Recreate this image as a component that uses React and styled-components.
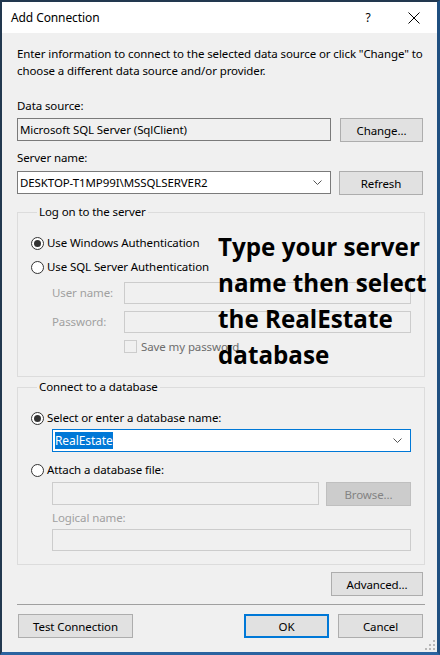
import React from "react";
import styled, { createGlobalStyle } from "styled-components";

const Global = createGlobalStyle`
  * { box-sizing: border-box; }
  body {
    margin: 0;
    background: #1c2b3d;
    font-family: "Noto Sans", "Open Sans", sans-serif;
    font-size: 11.5px;
    letter-spacing: -0.1px;
    color: #000;
  }
`;

const Window = styled.div`
  width: 440px;
  height: 655px;
  display: flex;
  flex-direction: column;
  border-style: solid;
  border-color: #22384f #1f4f80 #2a63a0 #22384f;
  border-width: 2px 3px 3px 2px;
  background: #f0f0f0;
  position: relative;
  overflow: hidden;
`;

const TitleBar = styled.div`
  height: 31px;
  flex: none;
  background: #fff;
  display: flex;
  align-items: center;
  padding: 0 0 0 9px;
  font-size: 12px;
  .title {
    flex: 1;
  }
  .ctl {
    width: 46px;
    height: 31px;
    display: flex;
    align-items: center;
    justify-content: center;
  }
`;

const Body = styled.div`
  flex: 1;
  padding: 12px 14px 0 15px;
  display: flex;
  flex-direction: column;
`;

const Desc = styled.p`
  margin: 0;
  line-height: 17px;
  white-space: nowrap;
`;

const Label = styled.div`
  line-height: 16px;
  height: 16px;
  margin-top: ${(p) => p.$mt ?? 0}px;
  margin-bottom: ${(p) => p.$mb ?? 0}px;
  color: ${(p) => (p.$disabled ? "#a0a0a0" : "#000")};
  white-space: nowrap;
`;

const Row = styled.div`
  display: flex;
  align-items: flex-start;
  gap: ${(p) => p.$gap ?? 8}px;
  margin-top: ${(p) => p.$mt ?? 0}px;
  padding-left: ${(p) => p.$indent ?? 0}px;
`;

const TextBox = styled.div`
  height: ${(p) => p.$h ?? 23}px;
  width: ${(p) => (p.$w ? p.$w + "px" : "auto")};
  flex: ${(p) => (p.$w ? "none" : 1)};
  border: 1px solid ${(p) => p.$border || (p.$disabled ? "#cccccc" : "#7a7a7a")};
  background: ${(p) => (p.$white ? "#fff" : "#f0f0f0")};
  display: flex;
  align-items: center;
  padding: 0 2px 0 2px;
  white-space: nowrap;
  position: relative;
`;

const Chevron = styled.svg`
  position: absolute;
  right: 8px;
  top: 50%;
  margin-top: -3px;
`;

const Button = styled.div`
  width: ${(p) => p.$w}px;
  height: ${(p) => p.$h ?? 24}px;
  flex: none;
  display: flex;
  align-items: center;
  justify-content: center;
  background: ${(p) => (p.$disabled ? "#cccccc" : "#e1e1e1")};
  color: ${(p) => (p.$disabled ? "#838383" : "#000")};
  border: ${(p) =>
    p.$default ? "2px solid #0078d7" : `1px solid ${p.$disabled ? "#bfbfbf" : "#adadad"}`};
  white-space: nowrap;
`;

const Group = styled.fieldset`
  margin: ${(p) => p.$mt ?? 0}px 0 0 0;
  width: 408px;
  border: 1px solid #dcdcdc;
  padding: 15px 13px ${(p) => p.$pb ?? 13}px 13px;
  min-width: 0;
  legend {
    margin-left: 6px;
    padding: 0 2px;
    line-height: 16px;
  }
`;

const RadioRow = styled.label`
  display: flex;
  align-items: center;
  gap: 3px;
  height: 16px;
  line-height: 16px;
  margin-top: ${(p) => p.$mt ?? 0}px;
  white-space: nowrap;
`;

const RadioDot = styled.span`
  width: 13px;
  height: 13px;
  border-radius: 50%;
  border: 1px solid #333;
  background: #fff;
  display: flex;
  align-items: center;
  justify-content: center;
  flex: none;
  &::after {
    content: "";
    width: 7px;
    height: 7px;
    border-radius: 50%;
    background: ${(p) => (p.$on ? "#333" : "transparent")};
  }
`;

const FieldLabel = styled.div`
  width: 72px;
  flex: none;
  line-height: 22px;
  color: #a0a0a0;
`;

const CheckRow = styled.div`
  display: flex;
  align-items: center;
  gap: 4px;
  height: 13px;
  margin-top: 7px;
  padding-left: 93px;
  color: #6d6d6d;
  .box {
    width: 13px;
    height: 13px;
    border: 1px solid #cccccc;
    background: #f0f0f0;
  }
`;

const Selected = styled.span`
  background: #0078d7;
  color: #fff;
  line-height: 17px;
  font-size: 12px;
`;

const Spacer = styled.span`
  flex: 1;
`;

const Separator = styled.div`
  height: 1px;
  background: #a0a0a0;
  width: 408px;
  margin-top: 8px;
`;

const Footer = styled.div`
  display: flex;
  gap: 9px;
  margin-top: 9px;
  padding-left: 1px;
`;

const Annotation = styled.div`
  position: absolute;
  left: 216px;
  top: 227px;
  font-family: "Open Sans", "Noto Sans", sans-serif;
  font-weight: 700;
  font-size: 24.2px;
  letter-spacing: 0;
  line-height: 36px;
  color: #000;
  white-space: pre;
`;

const Grip = styled.svg`
  position: absolute;
  right: 2px;
  bottom: 2px;
`;

const chevron = (
  <Chevron width="9" height="5" viewBox="0 0 9 5">
    <path d="M0.5 0.5 L4.5 4.5 L8.5 0.5" fill="none" stroke="#555" />
  </Chevron>
);

export default function App() {
  return (
    <>
      <Global />
      <Window>
        <TitleBar>
          <span className="title">Add Connection</span>
          <span className="ctl">?</span>
          <span className="ctl">
            <svg width="12" height="12" viewBox="0 0 12 12">
              <path d="M0.5 0.5 L11.5 11.5 M11.5 0.5 L0.5 11.5" stroke="#000" strokeWidth="1" />
            </svg>
          </span>
        </TitleBar>
        <Body>
          <Desc>
            Enter information to connect to the selected data source or click "Change" to
            <br />
            choose a different data source and/or provider.
          </Desc>

          <Label $mt={19} $mb={4}>Data source:</Label>
          <Row $gap={9}>
            <TextBox $w={314}>Microsoft SQL Server (SqlClient)</TextBox>
            <Button $w={83}>Change...</Button>
          </Row>

          <Label $mt={8} $mb={5}>Server name:</Label>
          <Row $gap={8}>
            <TextBox $w={314} $white>
              DESKTOP-T1MP99I\MSSQLSERVER2
              {chevron}
            </TextBox>
            <Button $w={84}>Refresh</Button>
          </Row>

          <Group $mt={9} $pb={23}>
            <legend>Log on to the server</legend>
            <RadioRow>
              <RadioDot $on />
              Use Windows Authentication
            </RadioRow>
            <RadioRow $mt={8}>
              <RadioDot />
              Use SQL Server Authentication
            </RadioRow>
            <Row $mt={7} $gap={0} $indent={21}>
              <FieldLabel>User name:</FieldLabel>
              <TextBox $h={22} $disabled />
            </Row>
            <Row $mt={7} $gap={0} $indent={21}>
              <FieldLabel>Password:</FieldLabel>
              <TextBox $h={22} $disabled />
            </Row>
            <CheckRow>
              <span className="box" />
              Save my password
            </CheckRow>
          </Group>

          <Group $mt={2} $pb={13}>
            <legend>Connect to a database</legend>
            <RadioRow>
              <RadioDot $on />
              Select or enter a database name:
            </RadioRow>
            <Row $mt={3} $indent={21}>
              <TextBox $white $border="#0078d7">
                <Selected>RealEstate</Selected>
                {chevron}
              </TextBox>
            </Row>
            <RadioRow $mt={10}>
              <RadioDot />
              Attach a database file:
            </RadioRow>
            <Row $mt={4} $indent={21} $gap={7}>
              <TextBox $disabled />
              <Button $w={85} $disabled>Browse...</Button>
            </Row>
            <Row $mt={4} $indent={21}>
              <Label $disabled>Logical name:</Label>
            </Row>
            <Row $mt={3} $indent={21}>
              <TextBox $h={22} $disabled />
            </Row>
          </Group>

          <Row $mt={7}>
            <Spacer />
            <Button $w={92}>Advanced...</Button>
          </Row>

          <Separator />

          <Footer>
            <Button $w={115}>Test Connection</Button>
            <Spacer />
            <Button $w={85} $default>OK</Button>
            <Button $w={85}>Cancel</Button>
          </Footer>
        </Body>

        <Annotation>{"Type your server\nname then select\nthe RealEstate\ndatabase"}</Annotation>

        <Grip width="10" height="10" viewBox="0 0 10 10">
          <g fill="#b8b8b8">
            <rect x="8" y="0" width="2" height="2" />
            <rect x="4" y="4" width="2" height="2" />
            <rect x="8" y="4" width="2" height="2" />
            <rect x="0" y="8" width="2" height="2" />
            <rect x="4" y="8" width="2" height="2" />
            <rect x="8" y="8" width="2" height="2" />
          </g>
        </Grip>
      </Window>
    </>
  );
}
